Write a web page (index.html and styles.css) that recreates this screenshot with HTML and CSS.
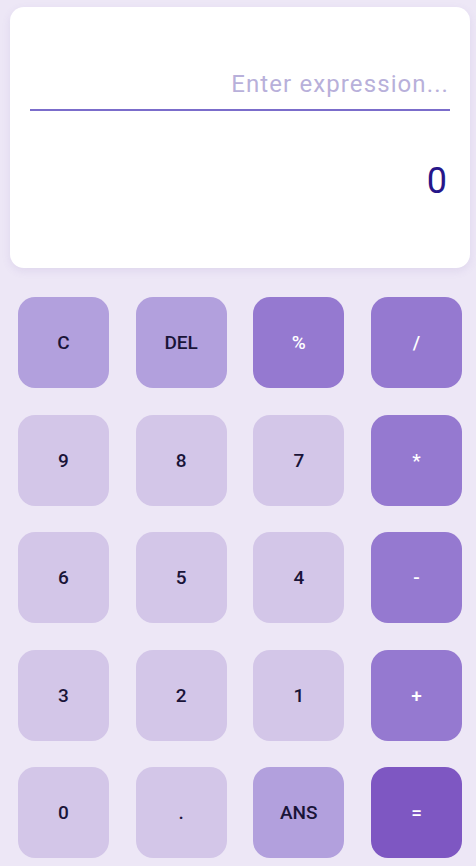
FILE: index.html
```html
<!DOCTYPE html>
<html>
<head>
<meta charset="utf-8">
<link rel="stylesheet" href="styles.css">
</head>
<body>
<div class="app">
  <div class="display">
    <div class="input-wrap">
      <div class="input">Enter expression...</div>
    </div>
    <div class="result">0</div>
  </div>
  <div class="keys">
    <div class="key fn">C</div>
    <div class="key fn">DEL</div>
    <div class="key op">%</div>
    <div class="key op">/</div>
    <div class="key num">9</div>
    <div class="key num">8</div>
    <div class="key num">7</div>
    <div class="key op">*</div>
    <div class="key num">6</div>
    <div class="key num">5</div>
    <div class="key num">4</div>
    <div class="key op">-</div>
    <div class="key num">3</div>
    <div class="key num">2</div>
    <div class="key num">1</div>
    <div class="key op">+</div>
    <div class="key num">0</div>
    <div class="key num">.</div>
    <div class="key fn">ANS</div>
    <div class="key eq">=</div>
  </div>
</div>
</body>
</html>
```
FILE: styles.css
```css
html, body {
  margin: 0;
  padding: 0;
  background: #ede7f6;
  font-family: Roboto, "Noto Sans", sans-serif;
}
.app {
  width: 476px;
  height: 866px;
  padding: 7px 6px 0 10px;
  box-sizing: border-box;
  display: flex;
  flex-direction: column;
}
.display {
  background: #ffffff;
  border-radius: 14px;
  height: 261px;
  box-sizing: border-box;
  padding: 0 20px;
  box-shadow: 0 3px 8px rgba(120, 100, 180, 0.12);
  display: flex;
  flex-direction: column;
}
.input-wrap {
  height: 102px;
  border-bottom: 2px solid #7b6dcb;
  display: flex;
  align-items: flex-end;
  justify-content: flex-end;
}
.input {
  font-size: 24px;
  color: #b8b0da;
  letter-spacing: 1.1px;
  line-height: 28px;
  padding-bottom: 11px;
  padding-right: 1px;
}
.result {
  text-align: right;
  font-size: 36px;
  color: #26168a;
  margin-top: 50px;
  line-height: 40px;
  padding-right: 3px;
}
.keys {
  margin-top: 29px;
  margin-left: 8px;
  margin-right: 8px;
  display: grid;
  grid-template-columns: repeat(4, 91px);
  grid-auto-rows: 91px;
  column-gap: 26.67px;
  row-gap: 26.5px;
}
.key {
  border-radius: 17px;
  display: flex;
  align-items: center;
  justify-content: center;
  font-size: 19px;
  font-weight: 500;
  color: #1a1438;
}
.fn { background: #b2a0dd; }
.num { background: #d3c6e8; }
.op { background: #9579d0; color: #ffffff; }
.eq { background: #7e57c2; color: #ffffff; }
```
